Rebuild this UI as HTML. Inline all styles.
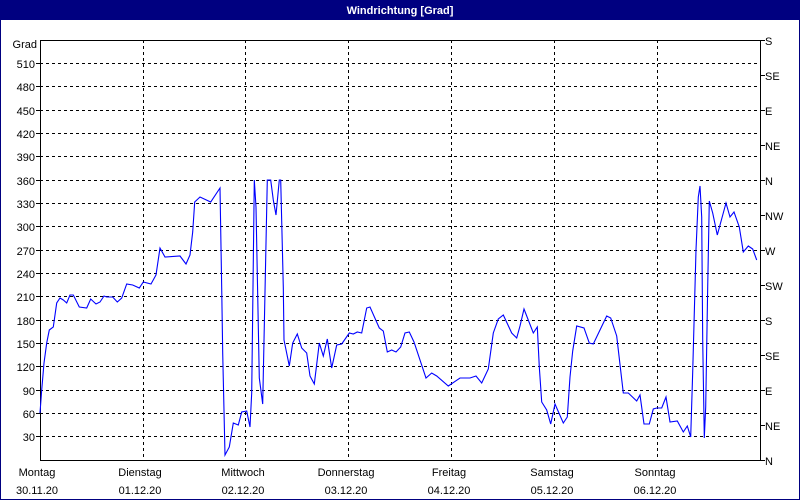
<!DOCTYPE html>
<html><head><meta charset="utf-8"><style>
html,body{margin:0;padding:0;background:#fff;width:800px;height:500px;overflow:hidden}
svg{display:block}
text{font-family:"Liberation Sans",sans-serif;font-size:11px;fill:#000}
</style></head><body>
<svg width="800" height="500" viewBox="0 0 800 500">
<rect x="0" y="0" width="800" height="500" fill="#fff"/>
<rect x="0" y="0" width="800" height="20" fill="#000080"/>
<rect x="0" y="0" width="1" height="500" fill="#000080"/>
<rect x="799" y="0" width="1" height="500" fill="#000080"/>
<rect x="0" y="499" width="800" height="1" fill="#000080"/>
<text x="400" y="14" text-anchor="middle" style="fill:#fff;font-weight:bold;font-size:11px">Windrichtung [Grad]</text>
<g stroke="#000" stroke-width="1" stroke-dasharray="3,3" fill="none">
<path d="M40 63.5H760M40 86.5H760M40 110.5H760M40 133.5H760M40 156.5H760M40 180.5H760M40 203.5H760M40 226.5H760M40 250.5H760M40 273.5H760M40 296.5H760M40 320.5H760M40 343.5H760M40 366.5H760M40 390.5H760M40 413.5H760M40 436.5H760"/>
<path d="M143.5 40V460M245.5 40V460M348.5 40V460M451.5 40V460M554.5 40V460M657.5 40V460"/>
</g>
<rect x="40.5" y="40.5" width="720" height="420" fill="none" stroke="#000"/>
<g stroke="#000"><path d="M761 40.5h4M761 75.5h4M761 110.5h4M761 145.5h4M761 180.5h4M761 215.5h4M761 250.5h4M761 285.5h4M761 320.5h4M761 355.5h4M761 390.5h4M761 425.5h4M761 460.5h4"/>
<path d="M36 63.5h4M36 86.5h4M36 110.5h4M36 133.5h4M36 156.5h4M36 180.5h4M36 203.5h4M36 226.5h4M36 250.5h4M36 273.5h4M36 296.5h4M36 320.5h4M36 343.5h4M36 366.5h4M36 390.5h4M36 413.5h4M36 436.5h4"/></g>
<g text-anchor="end">
<text x="37" y="48">Grad</text>
<text x="35" y="68">510</text><text x="35" y="91">480</text><text x="35" y="115">450</text><text x="35" y="138">420</text><text x="35" y="161">390</text><text x="35" y="185">360</text><text x="35" y="208">330</text><text x="35" y="231">300</text><text x="35" y="255">270</text><text x="35" y="278">240</text><text x="35" y="301">210</text><text x="35" y="325">180</text><text x="35" y="348">150</text><text x="35" y="371">120</text><text x="35" y="395">90</text><text x="35" y="418">60</text><text x="35" y="441">30</text>
</g>
<g>
<text x="765" y="45">S</text><text x="765" y="80">SE</text><text x="765" y="115">E</text><text x="765" y="150">NE</text><text x="765" y="185">N</text><text x="765" y="220">NW</text><text x="765" y="255">W</text><text x="765" y="290">SW</text><text x="765" y="325">S</text><text x="765" y="360">SE</text><text x="765" y="395">E</text><text x="765" y="430">NE</text><text x="765" y="465">N</text>
</g>
<g text-anchor="middle">
<text x="37" y="476">Montag</text><text x="37" y="494">30.11.20</text>
<text x="140" y="476">Dienstag</text><text x="140" y="494">01.12.20</text>
<text x="243" y="476">Mittwoch</text><text x="243" y="494">02.12.20</text>
<text x="346" y="476">Donnerstag</text><text x="346" y="494">03.12.20</text>
<text x="449" y="476">Freitag</text><text x="449" y="494">04.12.20</text>
<text x="552" y="476">Samstag</text><text x="552" y="494">05.12.20</text>
<text x="655" y="476">Sonntag</text><text x="655" y="494">06.12.20</text>
</g>
<polyline fill="none" stroke="#0000ff" stroke-width="1.1" points="40,413 41.7,390 44,363 46.7,343 49.3,330 53.3,327 56.7,303 60,298 63.3,300 66.7,303 70,295 73.3,295 79.3,307 86.7,308 90.7,299 96,304 100,302 104,296 106.7,297 112.7,297 117.3,302 121.7,298 126.7,284 132.7,285 139.3,288 143.3,282 151,284 156,275 160,248 165,257 180,256 186,264 190,255 192.7,232 194.7,202 200,197 210.7,202 220,188 221.7,288 222.7,353 225,455 229.3,447 233.3,423 238.3,425 241.7,412 246.7,411 250,427 251.7,393 254.3,180 256,207 259.3,378 262.7,404 267.3,180 270.7,180 273.3,200 276,215 279.3,180 280.7,180 283.3,287 284,340 289.3,366 292.7,343 297.3,334 301.7,348 306.7,353 310,376 314.3,384 319.3,343 323.3,356 327.3,339 331.7,368 336.7,345 341.7,344 349.3,333 353.3,334 357.3,332 361.7,333 366.7,308 370,307 379.3,328 383.3,331 387.3,352 391.7,350 396,352 400.7,347 405,333 409.3,332 414,342 426,378 431.7,373 436.7,376 448.3,386 460,378 470,378 476,376 481.7,383 488.3,369 493.3,333 498.3,319 503.3,315 511.7,333 516.7,338 520,326 524,309 533.3,333 537.3,327 539.3,367 541.7,402 546.7,410 550.7,424 555,404 563.3,423 567.3,417 570,377 572.7,351 576.7,326 584,328 589.3,343 593.3,344 606.7,316 610.7,318 616.7,336 623.3,393 628.3,393 636.7,401 640,395 644,424 649.3,424 653.3,409 656.7,408 661.7,408 666,397 670,422 677.3,421 683.3,432 687.3,426 690.7,437 692.7,372 696,250 698.3,197 700,186 701.7,217 702.7,340 704.3,438 705.7,407 707.7,287 709.3,201 712.7,213 717.3,235 726,203 730,217 734,212 739.3,227 743.3,252 748.3,246 752.7,249 756.7,260"/>
</svg>
</body></html>
